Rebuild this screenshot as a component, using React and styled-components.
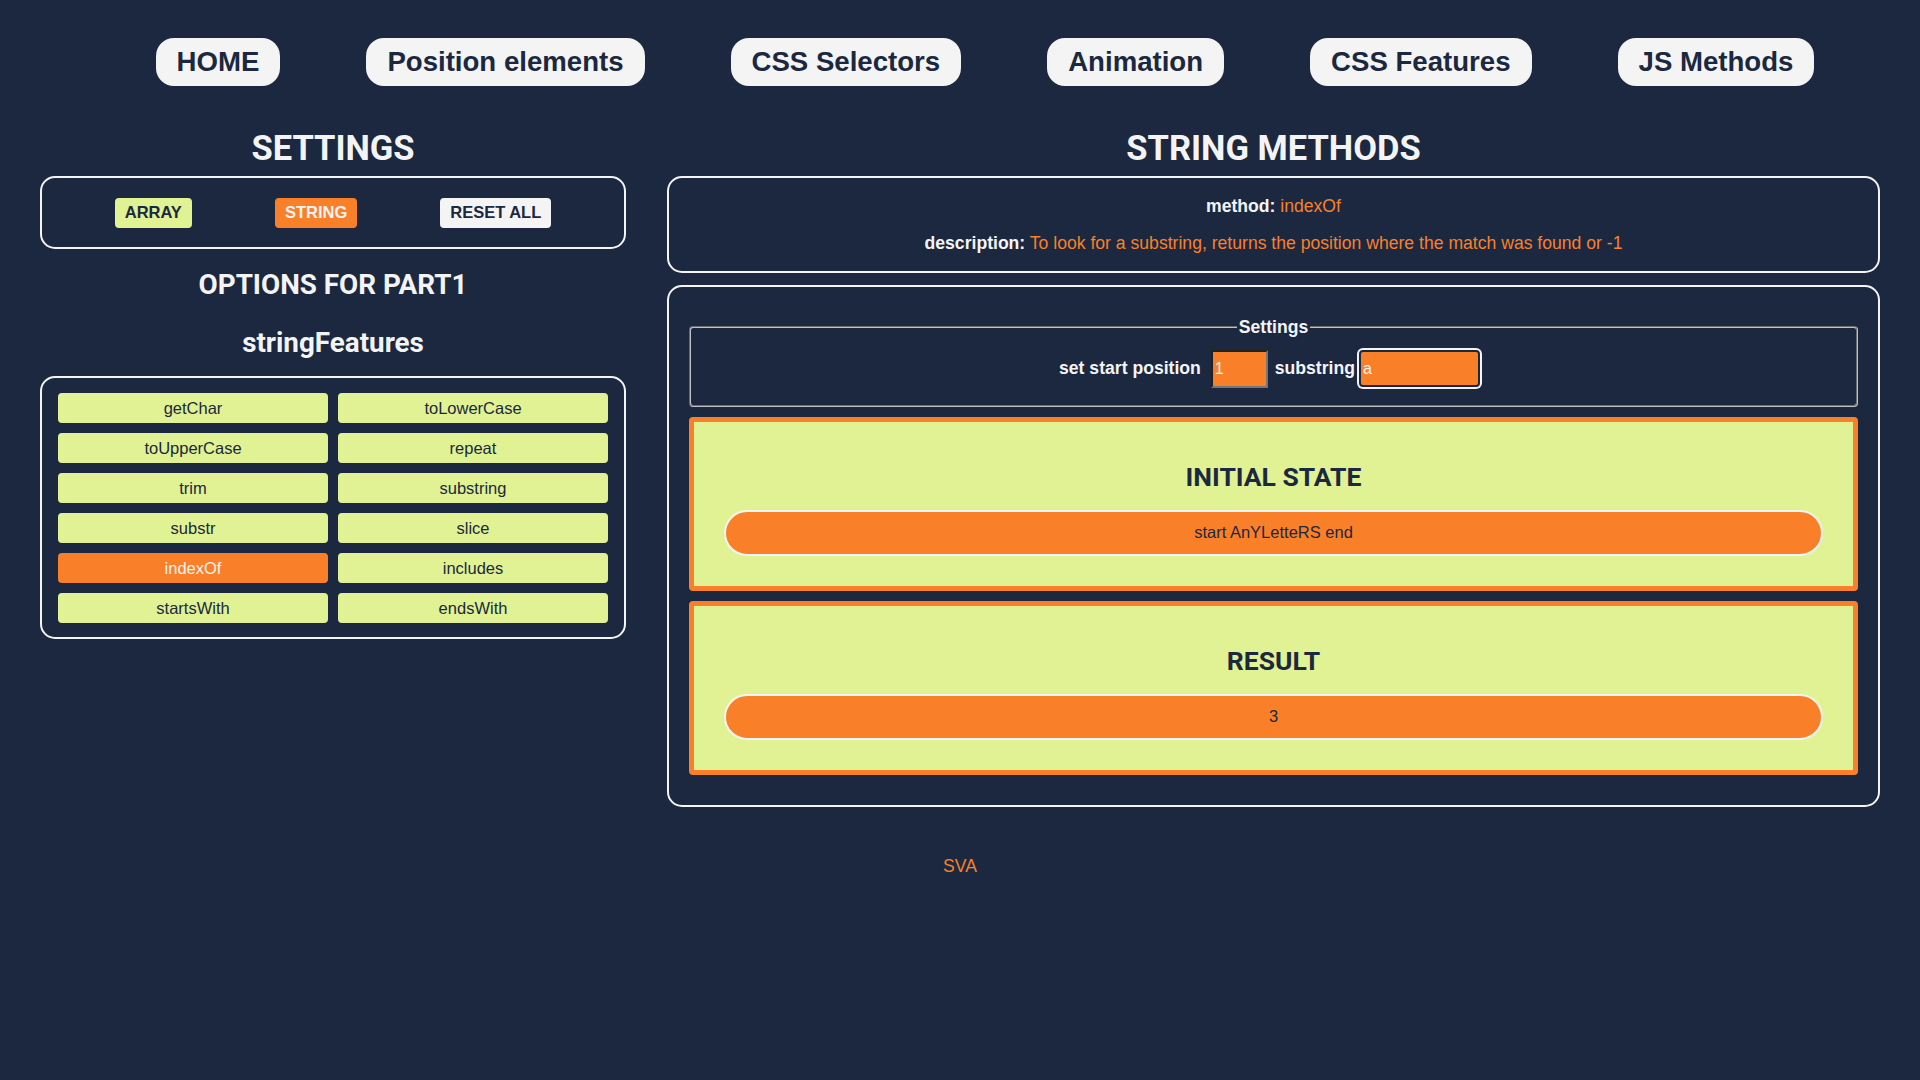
import styled, { createGlobalStyle } from 'styled-components';

const navy = '#1b2840';
const light = '#f4f4f4';
const lime = '#e0f293';
const orange = '#f98029';

const GlobalStyle = createGlobalStyle`
  html, body {
    margin: 0;
    padding: 0;
    background: ${navy};
    color: ${light};
    font-family: "Liberation Sans", Arial, sans-serif;
  }
  * {
    box-sizing: border-box;
  }
`;

const Page = styled.div`
  min-height: 1080px;
  background: ${navy};
`;

const Nav = styled.ul`
  display: flex;
  justify-content: center;
  gap: 86px;
  list-style: none;
  margin: 0;
  padding: 38px 0 0 50px;
`;

const NavButton = styled.li`
  display: flex;
  align-items: center;
  height: 48px;
  padding: 0 21px;
  background: ${light};
  border-radius: 18px;
  color: ${navy};
  font-size: 27.6px;
  font-weight: 700;
  white-space: nowrap;
`;

const Main = styled.main`
  display: grid;
  grid-template-columns: 586px 1fr;
  gap: 41px;
  align-items: start;
  margin-top: 42px;
  padding: 0 40px;
`;

const Column = styled.section`
  display: flex;
  flex-direction: column;
`;

const Title = styled.h2`
  margin: 0 0 8px;
  font-family: Roboto, sans-serif;
  font-size: 34.5px;
  line-height: 40px;
  font-weight: 700;
  text-align: center;
  color: ${light};
`;

const SubTitle = styled.h3`
  margin: ${(p) => p.$top}px 0 0;
  font-family: Roboto, sans-serif;
  font-size: 27.8px;
  line-height: 31px;
  font-weight: 700;
  text-align: center;
  color: ${light};
`;

const Frame = styled.div`
  border: 2px solid ${light};
  border-radius: 15px;
`;

const SwitchBar = styled(Frame)`
  display: flex;
  justify-content: center;
  align-items: center;
  gap: 83px;
  height: 73px;
`;

const Switch = styled.button`
  height: 30px;
  padding: 0 10px;
  border: none;
  border-radius: 4px;
  background: ${(p) => p.$bg};
  color: ${(p) => p.$fg};
  font-family: "Liberation Sans", Arial, sans-serif;
  font-size: 16.5px;
  font-weight: 700;
`;

const OptionsBox = styled(Frame)`
  display: grid;
  grid-template-columns: 1fr 1fr;
  gap: 10px;
  margin-top: 18px;
  padding: 15px 16px 14px;
`;

const Option = styled.button`
  height: 30px;
  border: none;
  border-radius: 4px;
  background: ${(p) => (p.$active ? orange : lime)};
  color: ${(p) => (p.$active ? light : navy)};
  font-family: "Liberation Sans", Arial, sans-serif;
  font-size: 16.5px;
`;

const InfoBox = styled(Frame)`
  text-align: center;
  & > p {
    margin: 17.6px 0;
    font-size: 17.6px;
    line-height: 20px;
  }
  & b {
    color: ${light};
  }
  & span {
    color: ${orange};
  }
`;

const WorkBox = styled(Frame)`
  margin-top: 12px;
  padding: 30px 20px;
  display: flex;
  flex-direction: column;
  gap: 10px;
`;

const Fieldset = styled.fieldset`
  margin: 0;
  padding: 13px 12px 17px;
  border: 2px groove #c0c0c0;
  border-radius: 4px;
  & > legend {
    padding: 0 2px;
    margin: 0 auto;
    font-size: 17.6px;
    line-height: 20px;
    font-weight: 700;
  }
`;

const InputRow = styled.div`
  display: flex;
  justify-content: center;
  align-items: center;
  height: 38px;
  padding-right: 8px;
`;

const Label = styled.label`
  font-size: 17.6px;
  font-weight: 700;
  margin: 0 ${(p) => p.$right}px 0 ${(p) => p.$left}px;
`;

const Field = styled.input`
  height: ${(p) => (p.$focus ? 37 : 38)}px;
  width: ${(p) => p.$w}px;
  padding: 0 2px;
  background: ${orange};
  color: ${light};
  font-family: "Liberation Sans", Arial, sans-serif;
  font-size: 16px;
  border: 2px ${(p) => (p.$focus ? 'solid ' + navy : 'inset #767676')};
  border-radius: ${(p) => (p.$focus ? 4 : 0)}px;
  box-shadow: ${(p) => (p.$focus ? `0 0 0 2px ${light}` : 'none')};
  outline: none;
`;

const Card = styled.div`
  padding: 30px;
  background: ${lime};
  border: 5px solid ${orange};
  border-radius: 4px;
  text-align: center;
`;

const CardTitle = styled.h3`
  margin: 9px 0 18px;
  font-family: Roboto, sans-serif;
  font-size: 26.5px;
  line-height: 31px;
  font-weight: 700;
  color: ${navy};
`;

const Pill = styled.div`
  display: flex;
  justify-content: center;
  align-items: center;
  height: 46px;
  background: ${orange};
  border: 2px solid ${light};
  border-radius: 23px;
  color: ${navy};
  font-size: 16.5px;
`;

const Footer = styled.footer`
  margin-top: 49px;
  text-align: center;
  color: ${orange};
  font-size: 17.6px;
  line-height: 20px;
`;

const links = ['HOME', 'Position elements', 'CSS Selectors', 'Animation', 'CSS Features', 'JS Methods'];

const methods = [
  'getChar', 'toLowerCase',
  'toUpperCase', 'repeat',
  'trim', 'substring',
  'substr', 'slice',
  'indexOf', 'includes',
  'startsWith', 'endsWith',
];

const App = () => {
  return (
    <Page>
      <GlobalStyle />
      <Nav>
        {links.map((l) => <NavButton key={l}>{l}</NavButton>)}
      </Nav>
      <Main>
        <Column>
          <Title>SETTINGS</Title>
          <SwitchBar>
            <Switch $bg={lime} $fg={navy}>ARRAY</Switch>
            <Switch $bg={orange} $fg={light}>STRING</Switch>
            <Switch $bg={light} $fg={navy}>RESET ALL</Switch>
          </SwitchBar>
          <SubTitle $top={20}>OPTIONS FOR PART1</SubTitle>
          <SubTitle $top={27}>stringFeatures</SubTitle>
          <OptionsBox>
            {methods.map((m) => <Option key={m} $active={m === 'indexOf'}>{m}</Option>)}
          </OptionsBox>
        </Column>
        <Column>
          <Title>STRING METHODS</Title>
          <InfoBox>
            <p><b>method:</b> <span>indexOf</span></p>
            <p><b>description:</b> <span>To look for a substring, returns the position where the match was found or -1</span></p>
          </InfoBox>
          <WorkBox>
            <Fieldset>
              <legend>Settings</legend>
              <InputRow>
                <Label $left={0} $right={10}>set start position</Label>
                <Field $w={57} defaultValue="1" readOnly />
                <Label $left={7} $right={4}>substring</Label>
                <Field $w={121} $focus defaultValue="a" readOnly />
              </InputRow>
            </Fieldset>
            <Card>
              <CardTitle>INITIAL STATE</CardTitle>
              <Pill>start AnYLetteRS end</Pill>
            </Card>
            <Card>
              <CardTitle>RESULT</CardTitle>
              <Pill>3</Pill>
            </Card>
          </WorkBox>
        </Column>
      </Main>
      <Footer>SVA</Footer>
    </Page>
  );
};

export default App;
